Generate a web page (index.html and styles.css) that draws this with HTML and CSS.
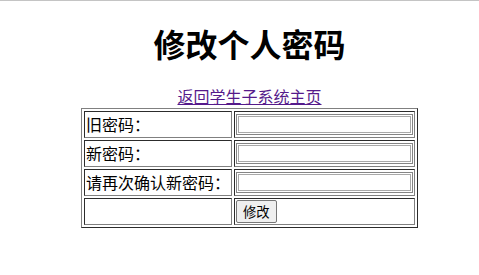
FILE: index.html
```html
<!DOCTYPE html>
<html lang="zh-CN">
<head>
    <meta charset="UTF-8">
    <meta name="viewport" content="width=device-width, initial-scale=1.0">
    <title>修改个人密码</title>
    <link rel="stylesheet" href="styles.css">
</head>
<body>
    <div class="page">
        <h1>修改个人密码</h1>
        <div class="back"><a href="#">返回学生子系统主页</a></div>
        <form>
            <table class="pwd-table">
                <tr>
                    <td class="label">旧密码：</td>
                    <td><input type="password" class="field"></td>
                </tr>
                <tr>
                    <td class="label">新密码：</td>
                    <td><input type="password" class="field"></td>
                </tr>
                <tr>
                    <td class="label">请再次确认新密码：</td>
                    <td><input type="password" class="field"></td>
                </tr>
                <tr>
                    <td class="label"></td>
                    <td><button type="submit" class="submit-btn">修改</button></td>
                </tr>
            </table>
        </form>
    </div>
</body>
</html>
```

FILE: styles.css
```css
/* Page */
body {
  margin: 0;
  border-top: 1px solid #c4c4c4;
  font-family: "Noto Sans CJK SC", "Noto Sans", sans-serif;
  font-size: 16px;
  color: #000;
}

.page {
  margin-left: 20px;
  text-align: center;
}

/* Title */
h1 {
  font-size: 32px;
  font-weight: bold;
  margin: 19px 0 18px;
}

/* Back link */
.back a {
  color: #551a8b;
}

/* Password table */
.pwd-table {
  margin: 0 auto;
  border: 1px outset gray;
  border-spacing: 2px;
  text-align: left;
}

.pwd-table td {
  border: 1px inset gray;
  padding: 1px;
  height: 23px;
  line-height: 23px;
  vertical-align: middle;
}

/* Inputs */
.field {
  display: block;
  box-sizing: border-box;
  width: 177px;
  height: 21px;
  margin: 0;
  border: 1px solid #858585;
  box-shadow: inset 0 0 0 1px #fff, inset 0 0 0 2px #a9a9a9;
  background: #fff;
  padding: 0 3px;
}

/* Submit button */
.submit-btn {
  display: block;
  box-sizing: border-box;
  height: 23px;
  margin: 0;
  padding: 0 6px;
  font-family: "Noto Sans CJK SC", sans-serif;
  font-size: 13.33px;
  line-height: 19px;
  color: #000;
  background-color: #efefef;
  border: 1px solid #767676;
  border-radius: 2px;
}
```
